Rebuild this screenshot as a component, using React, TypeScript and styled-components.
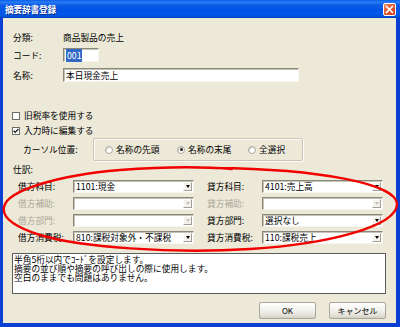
import React from "react";
import styled, { createGlobalStyle } from "styled-components";

const FONT = `"Noto Sans CJK JP", "Noto Sans CJK SC", "Noto Sans", sans-serif`;

const Global = createGlobalStyle`
  html, body { margin: 0; padding: 0; background: #ffffff; }
  body { font-family: ${FONT}; }
  * { box-sizing: border-box; }
`;

const Window = styled.div`
  position: relative;
  width: 400px;
  height: 327px;
  display: flex;
  flex-direction: column;
  font-family: ${FONT};
  font-size: 8.7px;
  color: #000;
  overflow: hidden;
`;

const TitleBar = styled.div`
  height: 18px;
  flex: none;
  display: flex;
  align-items: center;
  justify-content: space-between;
  padding: 0 4px 0 5px;
  background: linear-gradient(
    to bottom,
    #0a5fe8 0%,
    #2a7cf5 12%,
    #0a5ae6 30%,
    #0054e3 55%,
    #0058ec 80%,
    #0050d8 92%,
    #0040b8 100%
  );
`;

const Title = styled.span`
  color: #fff;
  font-weight: bold;
  font-size: 8.7px;
  letter-spacing: -0.2px;
  text-shadow: 1px 1px 0 #0a2a8a;
`;

const CloseButton = styled.div`
  width: 13px;
  height: 13px;
  border: 1px solid #fff;
  border-radius: 2px;
  background: linear-gradient(135deg, #f08a66 0%, #e2582f 45%, #c8401a 100%);
  display: flex;
  align-items: center;
  justify-content: center;
`;

const Body = styled.div`
  flex: 1;
  background: #ece9d8;
  border-style: solid;
  border-color: #0a3fd4;
  border-width: 0 4px 4px 3px;
  padding: 12px 10px 0 10px;
  display: flex;
  flex-direction: column;
`;

const FieldRow = styled.div<{ $mt: number }>`
  display: flex;
  align-items: center;
  height: 14px;
  margin-top: ${(p) => p.$mt}px;
`;

const Label = styled.span<{ $w?: number; $disabled?: boolean; $ml?: number }>`
  width: ${(p) => (p.$w ? `${p.$w}px` : "auto")};
  flex: none;
  white-space: nowrap;
  margin-left: ${(p) => p.$ml ?? 0}px;
  color: ${(p) => (p.$disabled ? "#aca899" : "#000")};
`;

const TextBox = styled.div<{ $w: number }>`
  width: ${(p) => p.$w}px;
  height: 14px;
  background: #fff;
  border: 1px solid;
  border-color: #8a877c #f6f5f0 #f6f5f0 #8a877c;
  box-shadow: inset 1px 1px 0 #c5c2b6;
  display: flex;
  align-items: center;
  padding-left: 2px;
  white-space: nowrap;
`;

const Selected = styled.span`
  background: #316ac5;
  color: #fff;
  padding: 0 1px;
`;

const CheckRow = styled.label<{ $mt: number }>`
  display: flex;
  align-items: center;
  gap: 4px;
  height: 11px;
  margin-top: ${(p) => p.$mt}px;
  margin-left: -1px;
`;

const CheckBox = styled.span`
  width: 8px;
  height: 8px;
  flex: none;
  background: #fff;
  border: 1px solid #6e6d66;
  display: flex;
  align-items: center;
  justify-content: center;
`;

const CursorRow = styled.div`
  display: flex;
  align-items: center;
  height: 23px;
  margin-top: 2px;
`;

const GroupBox = styled.div`
  width: 210px;
  height: 23px;
  border: 1px solid #c9c6b8;
  box-shadow: inset 1px 1px 0 #fbfaf6, 1px 1px 0 #fbfaf6;
  border-radius: 2px;
  display: grid;
  grid-template-columns: 72px 71px auto;
  align-items: center;
  padding-left: 11px;
`;

const RadioItem = styled.span`
  display: flex;
  align-items: center;
  gap: 3px;
  white-space: nowrap;
`;

const RadioCircle = styled.span<{ $checked?: boolean }>`
  width: 8px;
  height: 8px;
  flex: none;
  border-radius: 50%;
  background: #fff;
  border: 1px solid #a9a79e;
  box-shadow: inset 1px 1px 0 #d9d7cf;
  display: flex;
  align-items: center;
  justify-content: center;
  &::after {
    content: "";
    width: 3px;
    height: 3px;
    border-radius: 50%;
    background: ${(p) => (p.$checked ? "#1f1f1f" : "transparent")};
  }
`;

const SectionLabel = styled.div`
  height: 11px;
  margin-top: 3px;
  display: flex;
  align-items: center;
`;

const JournalGrid = styled.div`
  display: grid;
  grid-template-columns: 55px 121px 68px 121px;
  grid-auto-rows: 13px;
  row-gap: 4px;
  align-items: center;
  margin-top: 5px;
  margin-left: 5px;
`;

const GridLabel = styled.span<{ $disabled?: boolean; $right?: boolean }>`
  white-space: nowrap;
  padding-left: ${(p) => (p.$right ? 13 : 0)}px;
  color: ${(p) => (p.$disabled ? "#aca899" : "#000")};
`;

const Combo = styled.div`
  height: 13px;
  background: #fff;
  border: 1px solid;
  border-color: #8a877c #f6f5f0 #f6f5f0 #8a877c;
  box-shadow: inset 1px 1px 0 #c5c2b6;
  display: flex;
  align-items: center;
  padding: 0 1px 0 2px;
`;

const ComboText = styled.span`
  flex: 1;
  white-space: nowrap;
  overflow: hidden;
`;

const DropButton = styled.span<{ $disabled?: boolean }>`
  width: 9px;
  height: 9px;
  flex: none;
  background: #f3f2ec;
  border: 1px solid;
  border-color: #ffffff #a09e95 #a09e95 #ffffff;
  display: flex;
  align-items: center;
  justify-content: center;
  &::after {
    content: "";
    border-left: 2.5px solid transparent;
    border-right: 2.5px solid transparent;
    border-top: 3px solid ${(p) => (p.$disabled ? "#c4c2b8" : "#000")};
  }
`;

const Memo = styled.div`
  margin-top: 9px;
  margin-left: -1px;
  height: 41px;
  background: #fff;
  border: 1px solid #5c5c5c;
  padding: 1px 0 0 1px;
  line-height: 9px;
  white-space: nowrap;
`;

const ButtonRow = styled.div`
  display: flex;
  justify-content: flex-end;
  gap: 13px;
  margin-top: 8px;
`;

const Button = styled.div`
  width: 57px;
  height: 17px;
  border: 1px solid #aaa79c;
  border-radius: 2px;
  background: linear-gradient(to bottom, #ffffff 0%, #f3f2ee 45%, #e2dfd6 85%, #d2cec3 100%);
  display: flex;
  align-items: center;
  justify-content: center;
  font-size: 8px;
`;

const Annotation = styled.svg`
  position: absolute;
  left: 0;
  top: 0;
  pointer-events: none;
`;

type Pair = { label: string; value: string; disabled?: boolean };

const rows: [Pair, Pair][] = [
  [
    { label: "借方科目:", value: "1101:現金" },
    { label: "貸方科目:", value: "4101:売上高" },
  ],
  [
    { label: "借方補助:", value: "", disabled: true },
    { label: "貸方補助:", value: "", disabled: true },
  ],
  [
    { label: "借方部門:", value: "", disabled: true },
    { label: "貸方部門:", value: "選択なし" },
  ],
  [
    { label: "借方消費税:", value: "810:課税対象外・不課税" },
    { label: "貸方消費税:", value: "110:課税売上" },
  ],
];

export default function App() {
  return (
    <>
      <Global />
      <Window>
        <TitleBar>
          <Title>摘要辞書登録</Title>
          <CloseButton>
            <svg width="9" height="9" viewBox="0 0 9 9">
              <path d="M1.5 1.5 L7.5 7.5 M7.5 1.5 L1.5 7.5" stroke="#fff" strokeWidth="1.6" strokeLinecap="square" />
            </svg>
          </CloseButton>
        </TitleBar>
        <Body>
          <FieldRow $mt={0}>
            <Label $w={50}>分類:</Label>
            <span>商品製品の売上</span>
          </FieldRow>
          <FieldRow $mt={4}>
            <Label $w={50}>コード:</Label>
            <TextBox $w={36}>
              <Selected>001</Selected>
            </TextBox>
          </FieldRow>
          <FieldRow $mt={6}>
            <Label $w={50}>名称:</Label>
            <TextBox $w={236}>本日現金売上</TextBox>
          </FieldRow>

          <CheckRow $mt={28}>
            <CheckBox />
            <span>旧税率を使用する</span>
          </CheckRow>
          <CheckRow $mt={4}>
            <CheckBox>
              <svg width="6" height="6" viewBox="0 0 6 6">
                <path d="M0.6 2.8 L2.2 4.4 L5.4 1.0" stroke="#1a1a1a" strokeWidth="1.3" fill="none" />
              </svg>
            </CheckBox>
            <span>入力時に編集する</span>
          </CheckRow>

          <CursorRow>
            <Label $w={70} $ml={10}>カーソル位置:</Label>
            <GroupBox>
              <RadioItem>
                <RadioCircle />
                名称の先頭
              </RadioItem>
              <RadioItem>
                <RadioCircle $checked />
                名称の末尾
              </RadioItem>
              <RadioItem>
                <RadioCircle />
                全選択
              </RadioItem>
            </GroupBox>
          </CursorRow>

          <SectionLabel>仕訳:</SectionLabel>
          <JournalGrid>
            {rows.map(([l, r], i) => (
              <React.Fragment key={i}>
                <GridLabel $disabled={l.disabled}>{l.label}</GridLabel>
                <Combo>
                  <ComboText>{l.value}</ComboText>
                  <DropButton $disabled={l.disabled} />
                </Combo>
                <GridLabel $right $disabled={r.disabled}>{r.label}</GridLabel>
                <Combo>
                  <ComboText>{r.value}</ComboText>
                  <DropButton $disabled={r.disabled} />
                </Combo>
              </React.Fragment>
            ))}
          </JournalGrid>

          <Memo>
            半角5桁以内でｺｰﾄﾞを設定します。
            <br />
            摘要の並び順や摘要の呼び出しの際に使用します。
            <br />
            空白のままでも問題はありません。
          </Memo>

          <ButtonRow>
            <Button>OK</Button>
            <Button>キャンセル</Button>
          </ButtonRow>
        </Body>
        <Annotation width="400" height="327" viewBox="0 0 400 327">
          <path
            d="M 215 168 C 320 169, 397 184, 397 204 C 397 226, 330 244, 250 249 C 170 254, 80 247, 40 235 C 12 226, 2 216, 4 207 C 7 190, 60 175, 120 170 C 160 167, 195 166, 232 169"
            stroke="#f20000"
            strokeWidth="2.4"
            fill="none"
            strokeLinecap="round"
          />
        </Annotation>
      </Window>
    </>
  );
}
